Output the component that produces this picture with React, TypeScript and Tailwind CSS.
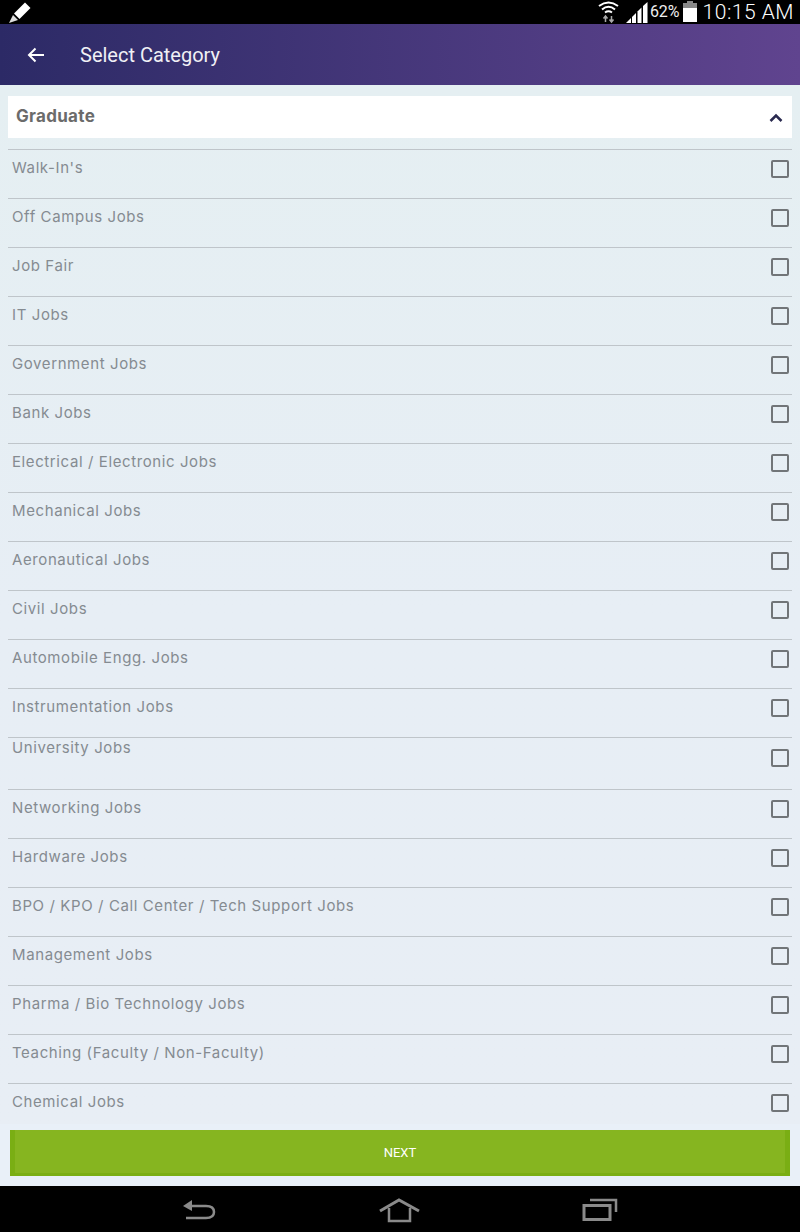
const items: [string, string?][] = [
  ["Walk-In's"], ["Off Campus Jobs"], ["Job Fair"], ["IT Jobs"], ["Government Jobs"], ["Bank Jobs"],
  ["Electrical / Electronic Jobs"], ["Mechanical Jobs"], ["Aeronautical Jobs"], ["Civil Jobs"],
  ["Automobile Engg. Jobs"], ["Instrumentation Jobs"], ["University Jobs", "tall"], ["Networking Jobs"],
  ["Hardware Jobs"], ["BPO / KPO / Call Center / Tech Support Jobs"], ["Management Jobs"],
  ["Pharma / Bio Technology Jobs"], ["Teaching (Faculty / Non-Faculty)"], ["Chemical Jobs"],
];

function StatusBar() {
  return (
    <div className="h-6 shrink-0 bg-black flex items-center justify-between text-white">
      <svg width="24" height="24" viewBox="0 0 24 24" className="ml-2" fill="#fff">
        <path d="M6 13.500 L17 2.500 L22.500 8 L11.500 19 Z" />
        <path d="M5 15 L10 20 L1 23 Z" fill="#ddd" />
      </svg>
      <div className="flex items-center h-6 mr-[6px]">
        <svg width="24" height="24" viewBox="0 0 24 24" fill="none" stroke="#fff" className="mr-[5px]">
          <path d="M2 6 Q11.500 -1 21 6" strokeWidth="2" />
          <path d="M5 9.500 Q11.500 4 18 9.500" strokeWidth="2" />
          <path d="M8 12.500 Q11.500 10 15 12.500" strokeWidth="2" />
          <path d="M8.500 22 V17 M6.500 18.500 L8.500 16 L10.500 18.500" stroke="#aaa" strokeWidth="1.500" />
          <path d="M14.500 16 V21 M12.500 19.500 L14.500 22 L16.500 19.500" stroke="#aaa" strokeWidth="1.500" />
        </svg>
        <svg width="23" height="21" viewBox="0 0 23 21" fill="#fff" className="mt-[1px]">
          <path d="M0 21 L5 16 V21 Z" />
          <path d="M6 15 L10 11 V21 H6 Z" />
          <path d="M11.500 9.500 L15.500 5.500 V21 H11.500 Z" />
          <path d="M17 4 L21.500 0 V21 H17 Z" />
        </svg>
        <span className="ml-[1px] text-[16px] leading-6 font-['Roboto',sans-serif] text-[#eee]">62%</span>
        <svg width="14" height="21" viewBox="0 0 14 21" className="ml-[3px] mt-[-2px]">
          <rect x="4" y="0" width="6" height="2" fill="#888" />
          <rect x="0" y="2" width="14" height="5" fill="#888" />
          <rect x="0" y="7" width="14" height="14" fill="#fff" />
        </svg>
        <span className="ml-[6px] text-[21px] leading-[22px] tracking-[0.5px] font-['Roboto',sans-serif] font-light">10:15 AM</span>
      </div>
    </div>
  );
}

function Header() {
  return (
    <div className="h-[61px] shrink-0 bg-gradient-to-r from-[#2c2a66] to-[#60448f] flex items-center text-white">
      <svg width="18" height="18" viewBox="0 0 18 18" fill="none" stroke="#fff" strokeWidth="2" className="ml-[27px]">
        <path d="M17 9 H2 M8.500 2.500 L2 9 L8.500 15.500" />
      </svg>
      <span className="ml-[35px] text-[20px] font-['Roboto',sans-serif] text-[#f0f0f5]">Select Category</span>
    </div>
  );
}

function Row({ label, tall }: { label: string; tall?: boolean }) {
  return (
    <div className={`border-t border-[#bfc5ca] flex justify-between ${tall ? "h-[52px]" : "h-[49px]"}`}>
      <span className={`ml-1 text-[15px] leading-5 tracking-[0.6px] text-[#858b91] font-['Inter',sans-serif] ${tall ? "mt-0" : "mt-[8px]"}`}>
        {label}
      </span>
      <span className={`mr-[3px] w-[18px] h-[18px] border-2 border-[#717578] rounded-[2px] ${tall ? "mt-[11px]" : "mt-[10px]"}`} />
    </div>
  );
}

function NavBar() {
  return (
    <div className="h-[46px] shrink-0 bg-black flex items-start">
      <svg width="34" height="24" viewBox="0 0 34 24" fill="none" stroke="#8a8a8a" strokeWidth="2.500" className="ml-[182px] mt-[12px]">
        <path d="M8 8 H24 Q32 8 32 14 Q32 20 24 20 H4" />
        <path d="M1 8 L10 2 V13 Z" fill="#8a8a8a" stroke="none" />
      </svg>
      <svg width="42" height="26" viewBox="0 0 42 26" fill="none" stroke="#8a8a8a" strokeWidth="2.500" className="ml-[163px] mt-[11px]">
        <path d="M1 14 L20 3 L40 14" strokeWidth="3" />
        <path d="M10 11 V24 H31 V11" />
      </svg>
      <svg width="36" height="26" viewBox="0 0 36 26" fill="none" stroke="#8a8a8a" className="ml-[161px] mt-[11px]">
        <rect x="2" y="8.500" width="26" height="14" strokeWidth="3" />
        <path d="M8 3 H34 V15" strokeWidth="2.500" />
      </svg>
    </div>
  );
}

export default function App() {
  return (
    <div className="w-[800px] h-[1232px] flex flex-col bg-[#e6edf4] overflow-hidden">
      <StatusBar />
      <Header />
      <div className="flex-1 min-h-0 overflow-hidden px-2 pt-[11px] bg-gradient-to-b from-[#e5eff2] to-[#e8eef5] via-[#e7eef5]">
        <div className="h-[42px] bg-white flex items-center justify-between px-2">
          <span className="text-[17px] font-bold tracking-[0.3px] text-[#6b6b6b] font-['Inter',sans-serif]">Graduate</span>
          <svg width="16" height="11" viewBox="0 0 16 11" fill="none" stroke="#29294f" strokeWidth="2.500">
            <path d="M2.500 9 L8 3.500 L13.500 9" />
          </svg>
        </div>
        <div className="mt-[11px]">
          {items.map(([label, tall]) => (
            <Row key={label} label={label} tall={!!tall} />
          ))}
        </div>
      </div>
      <div className="h-[62px] shrink-0 px-[10px] pt-[6px] bg-[#e9f0f8]">
        <button className="w-full h-[46px] pt-[3px] bg-[#86b520] border-x-[5px] border-b-[3px] border-[#7aae14] text-white text-[13px] font-['Roboto',sans-serif]">
          NEXT
        </button>
      </div>
      <NavBar />
    </div>
  );
}
